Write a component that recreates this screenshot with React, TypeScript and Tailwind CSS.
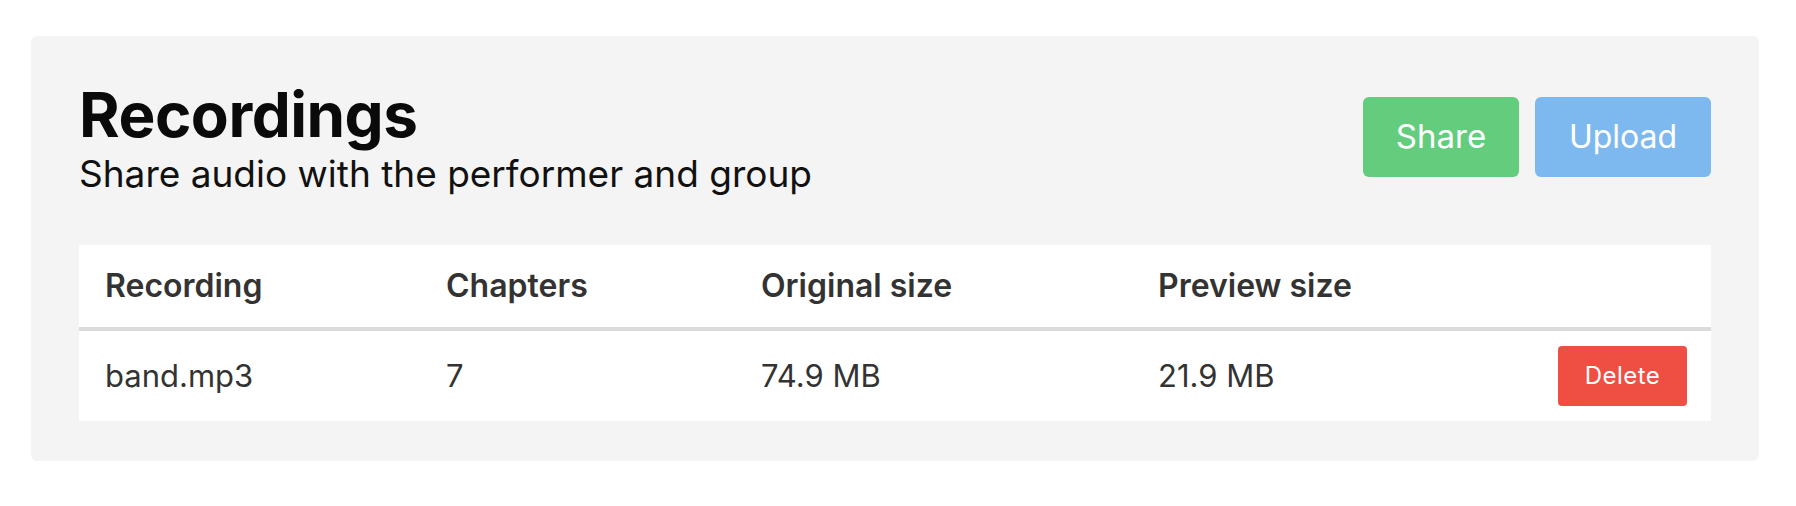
export default function App() {
  const rows = [
    { name: "band.mp3", chapters: "7", original: "74.9 MB", preview: "21.9 MB" },
  ];
  return (
    <div className="min-h-[506px] bg-white pt-[36px] pl-[31px] font-['Inter',sans-serif]">
      <div className="w-[1728px] rounded-[6px] bg-[#f4f4f4] px-[48px] pt-[48px] pb-[40px]">
        <div className="flex items-start justify-between">
          <div>
            <h1 className="text-[62px] leading-[62px] font-bold tracking-[-0.5px] text-[#0a0a0a]">Recordings</h1>
            <p className="mt-[7px] text-[37px] leading-[42px] text-[#111111]">Share audio with the performer and group</p>
          </div>
          <div className="mt-[13px] flex gap-[16px]">
            <button className="flex h-[80px] w-[156px] items-center justify-center rounded-[6px] bg-[#63cd7d] text-[33px] text-white">
              Share
            </button>
            <button className="flex h-[80px] w-[176px] items-center justify-center rounded-[6px] bg-[#7db9ef] text-[32px] text-white">
              Upload
            </button>
          </div>
        </div>
        <table className="mt-[50px] w-full table-fixed border-collapse bg-white text-[31px] text-[#333333]">
          <thead>
            <tr className="h-[84px] border-b-[4px] border-[#dbdbdb]">
              <th className="w-[367px] pl-[26px] text-left text-[32px] font-semibold">Recording</th>
              <th className="w-[315px] text-left text-[32px] font-semibold">Chapters</th>
              <th className="w-[397px] text-left text-[32px] font-semibold">Original size</th>
              <th className="text-left text-[32px] font-semibold">Preview size</th>
              <th className="w-[180px]"></th>
            </tr>
          </thead>
          <tbody>
            {rows.map((r) => (
              <tr key={r.name} className="h-[92px]">
                <td className="pl-[26px]">{r.name}</td>
                <td>{r.chapters}</td>
                <td>{r.original}</td>
                <td>{r.preview}</td>
                <td className="pr-[24px] text-right">
                  <button className="inline-flex h-[60px] w-[129px] items-center justify-center rounded-[4px] bg-[#ef4f43] text-[24px] tracking-[0.5px] text-white">
                    Delete
                  </button>
                </td>
              </tr>
            ))}
          </tbody>
        </table>
      </div>
    </div>
  );
}
